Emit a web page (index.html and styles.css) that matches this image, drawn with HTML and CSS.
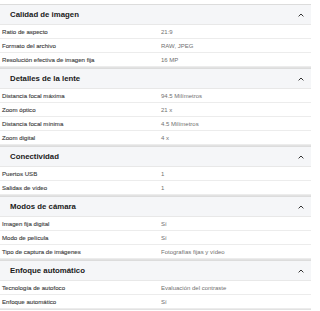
FILE: index.html
```html
<!DOCTYPE html>
<html lang="es">
<head>
<meta charset="utf-8">
<link rel="stylesheet" href="styles.css">
</head>
<body>
<div class="specs">
  <section class="sec">
    <div class="head"><span class="title">Calidad de imagen</span><svg class="chev" viewBox="0 0 6 4"><path d="M0.6 3.4 L3 1 L5.4 3.4"/></svg></div>
    <div class="row"><span class="lab">Ratio de aspecto</span><span class="val">21:9</span></div>
    <div class="row"><span class="lab">Formato del archivo</span><span class="val">RAW, JPEG</span></div>
    <div class="row"><span class="lab">Resolución efectiva de imagen fija</span><span class="val">16 MP</span></div>
  </section>
  <section class="sec">
    <div class="head"><span class="title">Detalles de la lente</span><svg class="chev" viewBox="0 0 6 4"><path d="M0.6 3.4 L3 1 L5.4 3.4"/></svg></div>
    <div class="row"><span class="lab">Distancia focal máxima</span><span class="val">94.5 Milímetros</span></div>
    <div class="row"><span class="lab">Zoom óptico</span><span class="val">21 x</span></div>
    <div class="row"><span class="lab">Distancia focal mínima</span><span class="val">4.5 Milímetros</span></div>
    <div class="row"><span class="lab">Zoom digital</span><span class="val">4 x</span></div>
  </section>
  <section class="sec">
    <div class="head"><span class="title">Conectividad</span><svg class="chev" viewBox="0 0 6 4"><path d="M0.6 3.4 L3 1 L5.4 3.4"/></svg></div>
    <div class="row"><span class="lab">Puertos USB</span><span class="val">1</span></div>
    <div class="row"><span class="lab">Salidas de vídeo</span><span class="val">1</span></div>
  </section>
  <section class="sec">
    <div class="head"><span class="title">Modos de cámara</span><svg class="chev" viewBox="0 0 6 4"><path d="M0.6 3.4 L3 1 L5.4 3.4"/></svg></div>
    <div class="row"><span class="lab">Imagen fija digital</span><span class="val">Sí</span></div>
    <div class="row"><span class="lab">Modo de película</span><span class="val">Sí</span></div>
    <div class="row"><span class="lab">Tipo de captura de imágenes</span><span class="val">Fotografías fijas y vídeo</span></div>
  </section>
  <section class="sec">
    <div class="head"><span class="title">Enfoque automático</span><svg class="chev" viewBox="0 0 6 4"><path d="M0.6 3.4 L3 1 L5.4 3.4"/></svg></div>
    <div class="row"><span class="lab">Tecnología de autofoco</span><span class="val">Evaluación del contraste</span></div>
    <div class="row"><span class="lab">Enfoque automático</span><span class="val">Sí</span></div>
  </section>
</div>
</body>
</html>
```
FILE: styles.css
```css
html, body {
  margin: 0;
  padding: 0;
  background: #ffffff;
}
body {
  padding-top: 4px;
  font-family: "Liberation Sans", Arial, sans-serif;
}
.specs {
  width: 311px;
  display: flex;
  flex-direction: column;
}
.sec {
  border-bottom: 1px solid #e2e2e2;
}
.head {
  height: 19px;
  border-top: 1px solid #dcdcdc;
  border-bottom: 1px solid #e8e8e8;
  background: #f5f6f8;
  display: flex;
  align-items: center;
  justify-content: space-between;
  padding: 0 7px 0 10px;
}
.title {
  font-size: 7.8px;
  font-weight: 700;
  color: #1a1a1a;
}
.chev {
  width: 6px;
  height: 4px;
  fill: none;
  stroke: #333;
  stroke-width: 1;
}
.row {
  height: 13px;
  border-bottom: 1px solid #ececec;
  display: grid;
  grid-template-columns: 159px 1fr;
  align-items: center;
  padding-left: 2px;
}
.lab {
  font-size: 6.1px;
  font-weight: 400;
  color: #3f3f3f;
  -webkit-text-stroke: 0.12px #3f3f3f;
}
.val {
  font-size: 6px;
  color: #707070;
}
```
